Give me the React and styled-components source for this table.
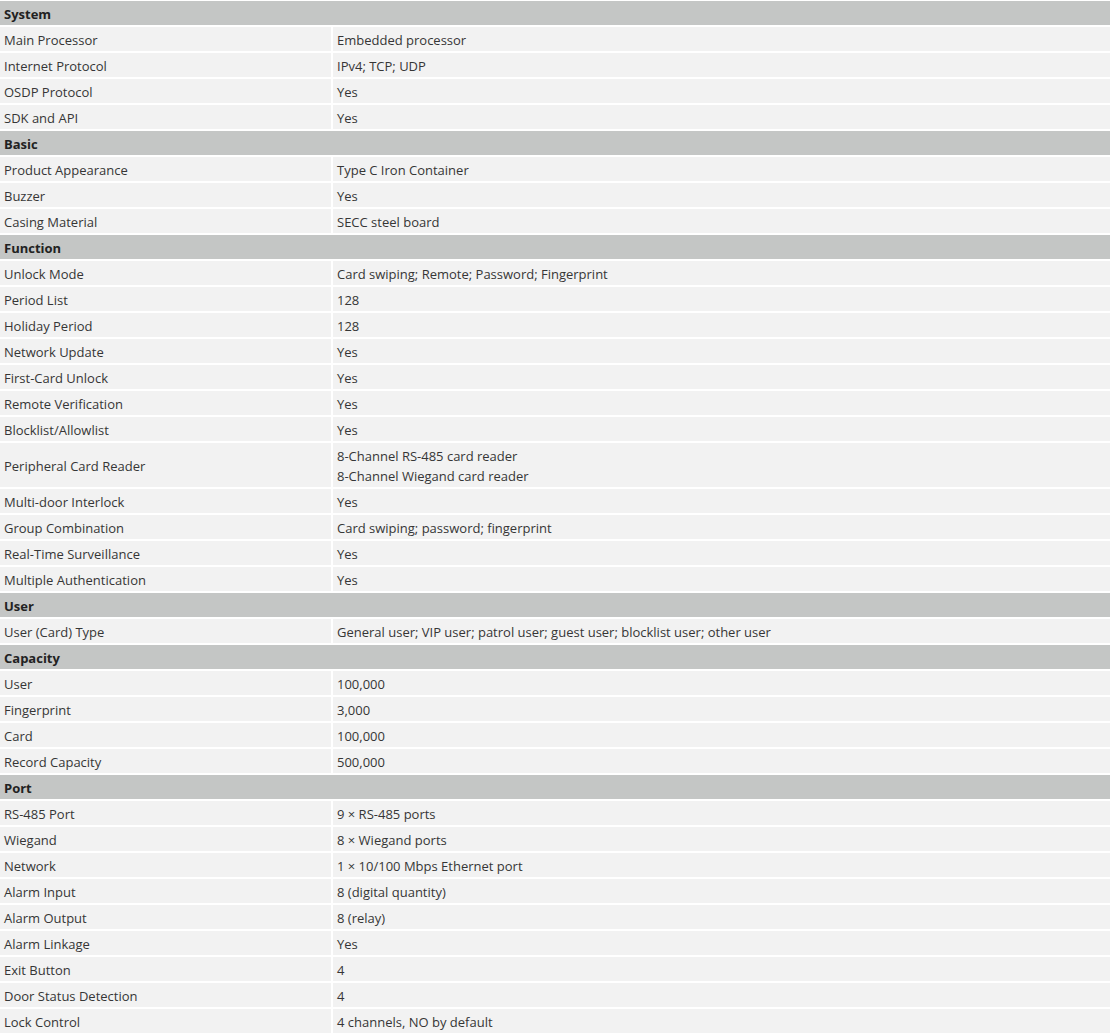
import React from "react";
import styled, { createGlobalStyle } from "styled-components";

const GlobalStyle = createGlobalStyle`
  body {
    margin: 0;
    background: #ffffff;
    font-family: "Open Sans", "Noto Sans", sans-serif;
  }
`;

const specs = [
  {
    group: "System",
    rows: [
      ["Main Processor", "Embedded processor"],
      ["Internet Protocol", "IPv4; TCP; UDP"],
      ["OSDP Protocol", "Yes"],
      ["SDK and API", "Yes"],
    ],
  },
  {
    group: "Basic",
    rows: [
      ["Product Appearance", "Type C Iron Container"],
      ["Buzzer", "Yes"],
      ["Casing Material", "SECC steel board"],
    ],
  },
  {
    group: "Function",
    rows: [
      ["Unlock Mode", "Card swiping; Remote; Password; Fingerprint"],
      ["Period List", "128"],
      ["Holiday Period", "128"],
      ["Network Update", "Yes"],
      ["First-Card Unlock", "Yes"],
      ["Remote Verification", "Yes"],
      ["Blocklist/Allowlist", "Yes"],
      ["Peripheral Card Reader", ["8-Channel RS-485 card reader", "8-Channel Wiegand card reader"]],
      ["Multi-door Interlock", "Yes"],
      ["Group Combination", "Card swiping; password; fingerprint"],
      ["Real-Time Surveillance", "Yes"],
      ["Multiple Authentication", "Yes"],
    ],
  },
  {
    group: "User",
    rows: [["User (Card) Type", "General user; VIP user; patrol user; guest user; blocklist user; other user"]],
  },
  {
    group: "Capacity",
    rows: [
      ["User", "100,000"],
      ["Fingerprint", "3,000"],
      ["Card", "100,000"],
      ["Record Capacity", "500,000"],
    ],
  },
  {
    group: "Port",
    rows: [
      ["RS-485 Port", "9 × RS-485 ports"],
      ["Wiegand", "8 × Wiegand ports"],
      ["Network", "1 × 10/100 Mbps Ethernet port"],
      ["Alarm Input", "8 (digital quantity)"],
      ["Alarm Output", "8 (relay)"],
      ["Alarm Linkage", "Yes"],
      ["Exit Button", "4"],
      ["Door Status Detection", "4"],
      ["Lock Control", "4 channels, NO by default"],
    ],
  },
];

export default function App() {
  return (
    <>
      <GlobalStyle />
      <SpecTable>
        <colgroup>
          <col style={{ width: 333 }} />
          <col />
        </colgroup>
        <tbody>
          {specs.map((s) => (
            <React.Fragment key={s.group}>
              <tr>
                <GroupCell colSpan={2}>{s.group}</GroupCell>
              </tr>
              {s.rows.map(([label, value]) => (
                <tr key={label}>
                  <Cell>{label}</Cell>
                  <Cell $last>
                    {Array.isArray(value)
                      ? value.map((v) => <Line key={v}>{v}</Line>)
                      : value}
                  </Cell>
                </tr>
              ))}
            </React.Fragment>
          ))}
        </tbody>
      </SpecTable>
    </>
  );
}

const SpecTable = styled.table`
  width: 1110px;
  table-layout: fixed;
  border-collapse: separate;
  border-spacing: 0;
  border-top: 1px solid #ffffff;
  font-size: 13px;
  line-height: 20px;
  color: #363636;
`;

const Cell = styled.td`
  background: #f2f2f2;
  padding: 3px 4px 1px;
  border-bottom: 2px solid #ffffff;
  border-right: ${(p) => (p.$last ? "none" : "2px solid #ffffff")};
  vertical-align: middle;
  white-space: nowrap;
`;

const GroupCell = styled.td`
  background: #c4c6c5;
  padding: 3px 4px 1px;
  border-bottom: 2px solid #ffffff;
  font-weight: 700;
  color: #222222;
`;

const Line = styled.div`
  display: block;
`;
